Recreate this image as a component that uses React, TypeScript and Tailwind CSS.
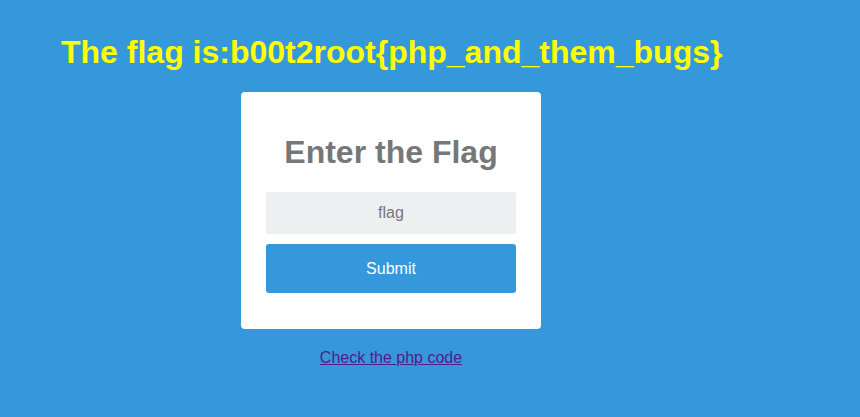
export default function App() {
  return (
    <div className="min-h-[417px] w-full bg-[#3498db] font-['Liberation_Sans',Arial,sans-serif]">
      <h1 className="pl-[61px] pt-[34px] text-[32px] font-bold leading-[37px] text-[#ffff00]">
        The flag is:b00t2root{'{'}php_and_them_bugs{'}'}
      </h1>
      <div className="ml-[241px] mt-[21px] flex w-[300px] flex-col items-center">
        <form
          className="flex w-full flex-col rounded-[4px] bg-white px-[25px] pb-[36px] pt-[42px]"
          onSubmit={(e) => e.preventDefault()}
        >
          <h2 className="text-center text-[32px] font-bold leading-[37px] text-[#777777]">Enter the Flag</h2>
          <input
            type="text"
            placeholder="flag"
            className="mt-[21px] h-[42px] w-full rounded-[3px] bg-[#ecf0f1] text-center text-[16px] text-[#555] outline-none placeholder:text-[#777777]"
          />
          <button
            type="submit"
            className="mt-[10px] h-[49px] w-full rounded-[3px] bg-[#3498db] text-[16px] text-white"
          >
            Submit
          </button>
        </form>
        <a href="#" className="mt-[20px] text-[16px] leading-[18px] text-[#551a8b] underline">
          Check the php code
        </a>
      </div>
    </div>
  );
}
